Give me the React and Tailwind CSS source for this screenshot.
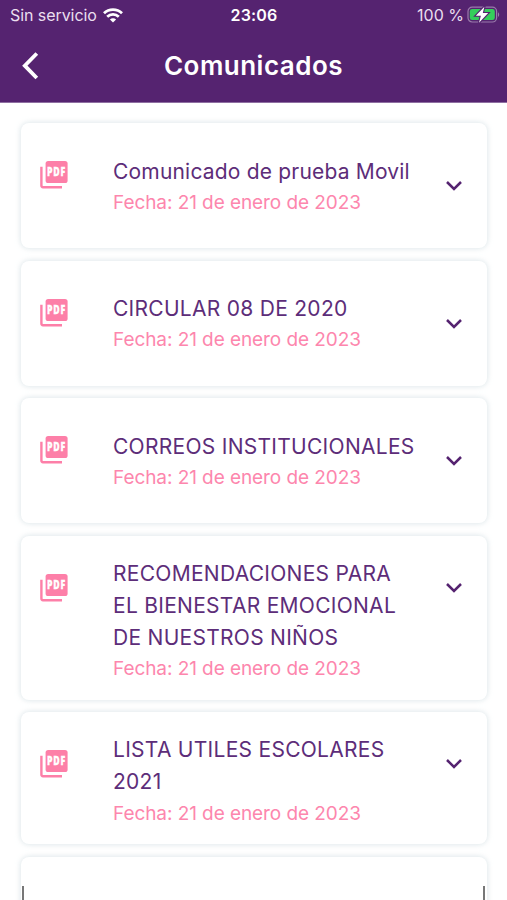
import React from 'react';

const comunicados = [
  { id: 1, lines: ['Comunicado de prueba Movil'], tracking: 'tracking-[0.19px]', height: 'h-[125px]', pad: 'pt-[33px]', arrow: 'pt-[50px]' },
  { id: 2, lines: ['CIRCULAR 08 DE 2020'], tracking: 'tracking-[0.28px]', height: 'h-[125px]', pad: 'pt-[32.5px]', arrow: 'pt-[50px]' },
  { id: 3, lines: ['CORREOS INSTITUCIONALES'], tracking: 'tracking-[0.28px]', height: 'h-[125px]', pad: 'pt-[33px]', arrow: 'pt-[50px]' },
  {
    id: 4,
    lines: ['RECOMENDACIONES PARA', 'EL BIENESTAR EMOCIONAL', 'DE NUESTROS NIÑOS'],
    tracking: 'tracking-[0.28px]',
    height: 'h-[164px]',
    pad: 'pt-[22px]',
    arrow: 'pt-[39px]',
  },
  { id: 5, lines: ['LISTA UTILES ESCOLARES', '2021'], tracking: 'tracking-[0.28px]', height: 'h-[132px]', pad: 'pt-[22px]', arrow: 'pt-[39px]' },
];

const WifiIcon = () => (
  <svg width="20" height="15" viewBox="0 0 20 15" fill="none" stroke="white" strokeWidth="2.8">
    <path d="M1 5.2C6 .4 14 .4 19 5.2" />
    <path d="M4.2 8.7C7.5 5.6 12.5 5.6 15.8 8.7" />
    <path d="M10 14.4 6.9 11.4C8.7 9.9 11.3 9.9 13.1 11.4Z" fill="white" stroke="none" />
  </svg>
);

const BatteryIcon = () => (
  <svg width="33" height="18" viewBox="0 0 33 18" fill="none">
    <rect x="1" y="1.2" width="28.6" height="14.8" rx="4.2" stroke="#9a7bab" strokeWidth="1.2" />
    <path d="M31 6.2c1.6.8 1.6 4 0 4.8Z" fill="#9a7bab" />
    <rect x="2.8" y="3.1" width="25" height="11" rx="2.4" fill="#35ce5b" />
    <path d="M17.4.8 8.8 9.7h5.1L12 16.7l9.2-9.6h-5.4Z" fill="white" stroke="#552370" strokeWidth="2.2" paintOrder="stroke" />
  </svg>
);

const PdfIcon = () => (
  <svg width="28" height="28" viewBox="0 0 28 28">
    <rect x="5.6" y="0" width="22" height="22" rx="2.6" fill="#fd7fa8" />
    <path d="M1.4 5.8V24.6Q1.4 26.2 3 26.2H22" fill="none" stroke="#fd7fa8" strokeWidth="2.4" />
    <text
      transform="translate(7 15.2) scale(.76 1)"
      fontSize="11.5"
      fontWeight="800"
      letterSpacing="1.1"
      fill="white"
      stroke="white"
      strokeWidth="0.3"
      className="font-['Open_Sans',sans-serif]"
    >
      PDF
    </text>
  </svg>
);

const ComunicadoCard = ({ item }) => (
  <div className={`flex shrink-0 rounded-lg bg-white pl-[19px] shadow-[0_0_5px_1px_rgba(205,218,224,0.6)] ${item.height}`}>
    <div className="w-[73px] shrink-0 pt-[38px]">
      <PdfIcon />
    </div>
    <div className={`flex-1 whitespace-nowrap ${item.pad}`}>
      {item.lines.map(line => (
        <p key={line} className={`text-[21px] leading-[32.3px] text-[#5d2d79] ${item.tracking}`}>{line}</p>
      ))}
      <p className="text-[19px] leading-[29px] tracking-[-0.07px] text-[#fd86ad]">Fecha: 21 de enero de 2023</p>
    </div>
    <div className={`w-[42px] shrink-0 ${item.arrow}`}>
      <svg width="18" height="24" viewBox="0 0 18 24" fill="none" stroke="#552370" strokeWidth="2.5">
        <path d="m2 9 7 7 7-7" />
      </svg>
    </div>
  </div>
);

const App = () => {
  return (
    <div className="relative flex h-[900px] w-[507px] flex-col overflow-hidden bg-white font-['Inter',sans-serif]">
      <header className="h-[103px] shrink-0 border-b border-[#8f6fa2] bg-[#552370] text-white">
        <div className="grid h-[30px] grid-cols-3 items-center pr-[7px] pl-2.5 text-[16px]">
          <div className="flex items-center gap-1.5 whitespace-nowrap text-[#eadfef]">
            <span className="tracking-[-0.07px]">Sin servicio</span>
            <WifiIcon />
          </div>
          <span className="pr-0.5 text-center font-semibold tracking-[0.2px]">23:06</span>
          <div className="flex items-center justify-end gap-[3px] whitespace-nowrap text-[#eadfef]">
            <span>100 %</span>
            <BatteryIcon />
          </div>
        </div>
        <div className="grid h-[71px] grid-cols-[60px_1fr_60px] items-center">
          <svg className="ml-[21px]" width="20" height="28" viewBox="0 0 20 28" fill="none" stroke="white" strokeWidth="3.8">
            <path d="M15.8 1.5 3.8 13.7l12 12.3" />
          </svg>
          <h1 className="text-center text-[26px] font-[560] tracking-[0.5px]">Comunicados</h1>
        </div>
      </header>

      <main className="flex flex-col gap-[12.5px] pt-5 pr-5 pl-[21px]">
        {comunicados.map(item => (
          <ComunicadoCard key={item.id} item={item} />
        ))}
        <div className="h-16 shrink-0 rounded-lg bg-white shadow-[0_0_5px_1px_rgba(205,218,224,0.6)]" />
      </main>

      {/* bottom sheet edges */}
      <div className="absolute bottom-0 left-[22px] h-[14px] w-[463px] border-x-2 border-[#777]" />
    </div>
  );
};

export default App;
